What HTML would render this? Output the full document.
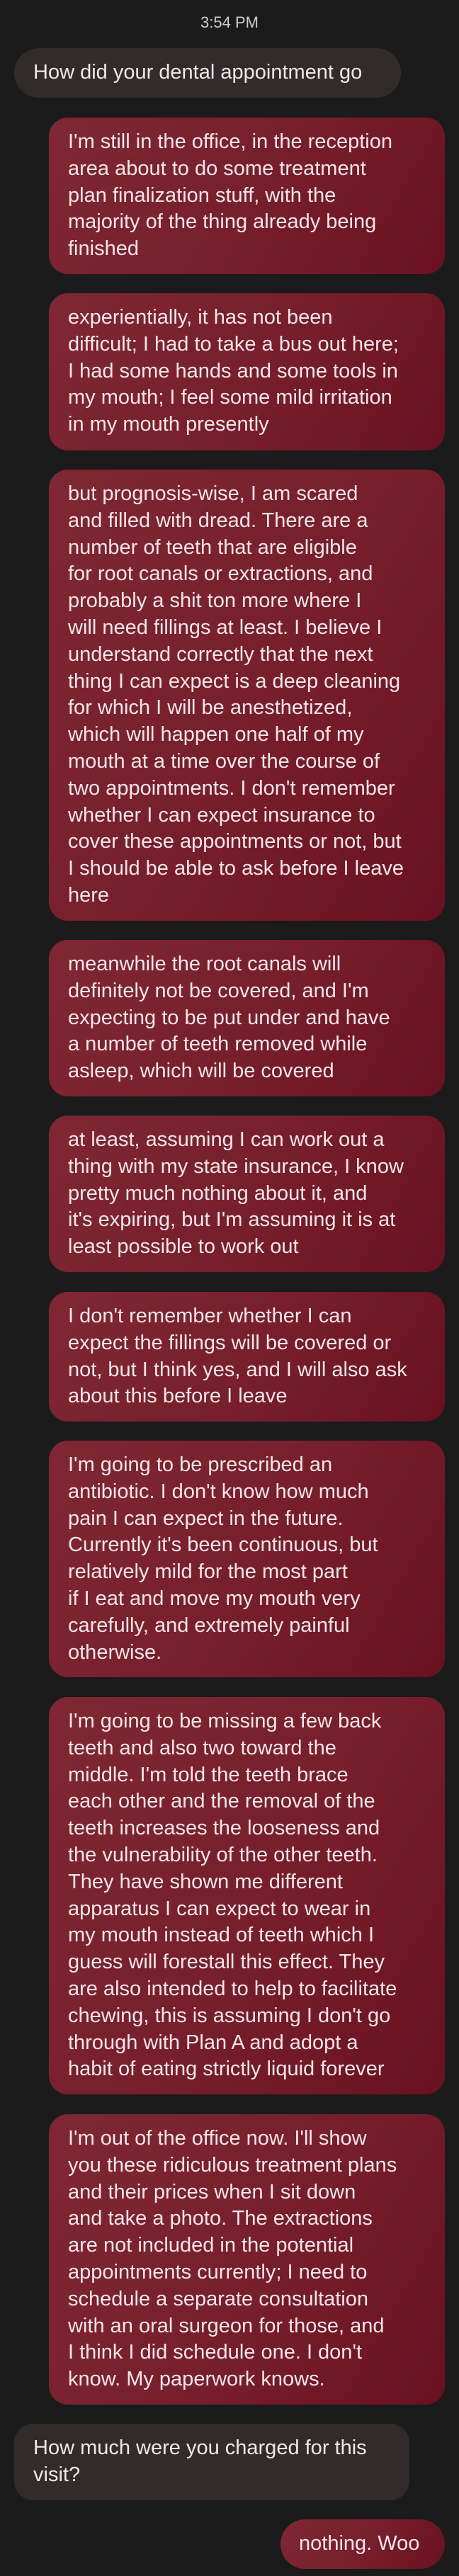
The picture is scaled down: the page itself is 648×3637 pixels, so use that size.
<!DOCTYPE html>
<html><head><meta charset="utf-8"><style>
html,body{margin:0;padding:0;background:#1b1b1b;}
body{width:648px;height:3637px;position:relative;overflow:hidden;font-family:"Liberation Sans",sans-serif;}
.t{position:absolute;top:17px;left:0;width:648px;text-align:center;color:#d0cccc;font-size:22px;line-height:30px;}
.b{position:absolute;box-sizing:border-box;padding:16px 0 16px 27px;border-radius:27px;color:#f1e6e8;font-size:29px;line-height:37.8px;white-space:nowrap;}
.b div{height:37.8px;}
.r{left:69px;width:559px;background:linear-gradient(120deg,#7f2733 0%,#771e2c 55%,#6a1121 100%);}
.g{left:20px;background:#322b2c;}
</style></head><body>
<div class="t">3:54 PM</div>
<div class="b g" style="top:68px;width:546px;height:70px;border-radius:35px;"><div>How did your dental appointment go</div></div>

<div class="b r" style="top:166px;height:221px;">
<div>I'm still in the office, in the reception</div><div>area about to do some treatment</div><div>plan finalization stuff, with the</div><div>majority of the thing already being</div><div>finished</div></div>

<div class="b r" style="top:414px;height:222px;">
<div>experientially, it has not been</div><div>difficult; I had to take a bus out here;</div><div>I had some hands and some tools in</div><div>my mouth; I feel some mild irritation</div><div>in my mouth presently</div></div>

<div class="b r" style="top:663px;height:637px;">
<div>but prognosis-wise, I am scared</div><div>and filled with dread. There are a</div><div>number of teeth that are eligible</div><div>for root canals or extractions, and</div><div>probably a shit ton more where I</div><div>will need fillings at least. I believe I</div><div>understand correctly that the next</div><div>thing I can expect is a deep cleaning</div><div>for which I will be anesthetized,</div><div>which will happen one half of my</div><div>mouth at a time over the course of</div><div>two appointments. I don't remember</div><div>whether I can expect insurance to</div><div>cover these appointments or not, but</div><div>I should be able to ask before I leave</div><div>here</div></div>

<div class="b r" style="top:1327px;height:221px;">
<div>meanwhile the root canals will</div><div>definitely not be covered, and I'm</div><div>expecting to be put under and have</div><div>a number of teeth removed while</div><div>asleep, which will be covered</div></div>

<div class="b r" style="top:1575px;height:221px;">
<div>at least, assuming I can work out a</div><div>thing with my state insurance, I know</div><div>pretty much nothing about it, and</div><div>it's expiring, but I'm assuming it is at</div><div>least possible to work out</div></div>

<div class="b r" style="top:1824px;height:183px;">
<div>I don't remember whether I can</div><div>expect the fillings will be covered or</div><div>not, but I think yes, and I will also ask</div><div>about this before I leave</div></div>

<div class="b r" style="top:2034px;height:334px;">
<div>I'm going to be prescribed an</div><div>antibiotic. I don't know how much</div><div>pain I can expect in the future.</div><div>Currently it's been continuous, but</div><div>relatively mild for the most part</div><div>if I eat and move my mouth very</div><div>carefully, and extremely painful</div><div>otherwise.</div></div>

<div class="b r" style="top:2396px;height:561px;">
<div>I'm going to be missing a few back</div><div>teeth and also two toward the</div><div>middle. I'm told the teeth brace</div><div>each other and the removal of the</div><div>teeth increases the looseness and</div><div>the vulnerability of the other teeth.</div><div>They have shown me different</div><div>apparatus I can expect to wear in</div><div>my mouth instead of teeth which I</div><div>guess will forestall this effect. They</div><div>are also intended to help to facilitate</div><div>chewing, this is assuming I don't go</div><div>through with Plan A and adopt a</div><div>habit of eating strictly liquid forever</div></div>

<div class="b r" style="top:2985px;height:410px;">
<div>I'm out of the office now. I'll show</div><div>you these ridiculous treatment plans</div><div>and their prices when I sit down</div><div>and take a photo. The extractions</div><div>are not included in the potential</div><div>appointments currently; I need to</div><div>schedule a separate consultation</div><div>with an oral surgeon for those, and</div><div>I think I did schedule one. I don't</div><div>know. My paperwork knows.</div></div>

<div class="b g" style="top:3422px;width:558px;height:108px;">
<div>How much were you charged for this</div><div>visit?</div></div>

<div class="b r" style="top:3557px;left:396px;width:232px;height:70px;border-radius:35px;padding-left:26px;">
<div>nothing. Woo</div></div>
</body></html>
